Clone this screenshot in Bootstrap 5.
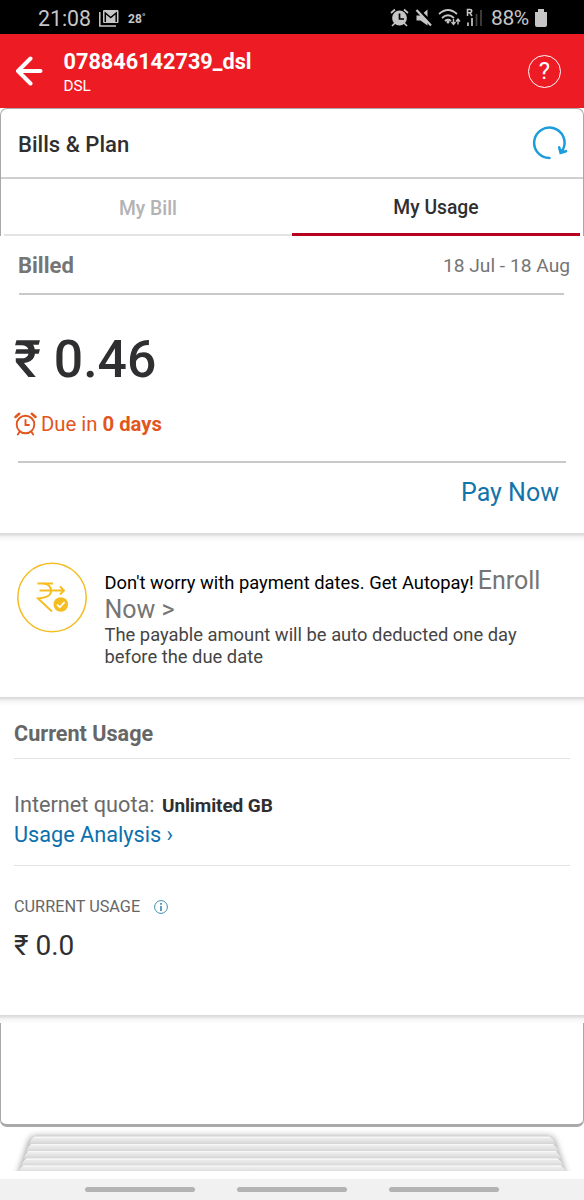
<!DOCTYPE html>
<html lang="en">
<head>
<meta charset="utf-8">
<meta name="viewport" content="width=device-width, initial-scale=1">
<title>Bills &amp; Plan</title>
<link href="https://cdn.jsdelivr.net/npm/bootstrap@5.3.0/dist/css/bootstrap.min.css" rel="stylesheet">
<style>
body{font-family:Roboto,"Noto Sans",sans-serif;background:#fff;color:#2f2f31;width:584px;height:1200px;overflow:hidden;line-height:1}
svg{display:block;flex:none}
.status{height:34px;background:#000;color:#c6c6c6;padding:3px 37px 0 38px}
.clock{font-size:21.3px;width:61px}
.temp{font-size:12px;font-weight:700;margin-left:9px}
.batt{font-size:21px;width:44px;margin-left:8px;letter-spacing:-.4px}
.appbar{height:74px;background:#ed1c24;color:#fff;padding:0 23px 0 15px}
.acct{font-size:21.7px;line-height:26px;font-weight:700;padding-top:3px}
.kind{font-size:15.3px;line-height:22px}
.help{width:33px;height:33px;border:1.6px solid #fff;font-size:24px}
.panel-top{height:128px;border:1px solid #a8a8a8;border-bottom:0;border-radius:7px 7px 0 0}
.heading{height:70px;border-bottom:2px solid #cfcfcf;padding:2px 15px 0 17px;font-size:22.1px;font-weight:500}
.heading svg{margin-top:-3px}
.tabs{height:57px;padding:0 3px;font-size:19.3px;font-weight:500}
.tabs div{padding-top:4px;border-bottom:2px solid #e3e3e3;color:#b3b3b3}
.tabs .current{border-bottom:3px solid #b8001f;color:#2f2f31}
.billed{height:57px;padding:2px 14px 0 18px;font-size:22px;font-weight:700;color:#757575}
.billed .period{font-size:19.2px;font-weight:400}
.rule{height:2px;background:#c9c9c9}
.amount{height:90px;line-height:90px;margin-top:20px;padding-left:14px;font-size:51.7px;font-weight:500;margin-bottom:-1px}
.due{height:40px;padding-left:14px;font-size:20.3px;color:#e2551d;gap:4px}
.pay{height:70px;line-height:60px;padding-right:25px;font-size:25px;color:#1374aa}
.lifted{background:linear-gradient(#d7d7d7 0,#e3e3e3 2px,#f5f5f5 4px,#fff 9px) no-repeat 0 0/100% 9px}
.autopay{height:164px;padding:29px 0 0 17px;gap:17.5px}
.autopay p{width:460px}
.lead-line{font-size:25px;line-height:29px;color:#757575;padding-top:4px}
.lead-line .pitch{font-size:18.35px;line-height:1;color:#000}
.note{font-size:18.35px;line-height:22px;color:#454545}
.usage{height:318px;padding:0 14px}
.usage h2{font-size:21.6px;line-height:35px;padding-top:19px;height:62px;font-weight:700;color:#666;border-bottom:1px solid #e2e2e2}
.quota{height:107px;padding-top:31px;font-size:21.7px;line-height:29px;color:#6a6a6a;border-bottom:1px solid #e2e2e2}
.quota b{font-size:19px;font-weight:700;letter-spacing:-.1px;color:#2f2f31;margin-left:2px}
.quota a{color:#0b70ad;text-decoration:none}
.cap{font-size:16.25px;line-height:28px;padding-top:27px;color:#666}
.value{font-size:28px;line-height:50px}
.tail{height:112px;padding-top:8px}
.tail div{height:104px;border:1.5px solid #a9a9a9;border-bottom-width:3px;border-top:0;border-radius:0 0 7px 7px}
.navkeys{height:21px;background:#f1f1f1;padding-left:85px;gap:42.5px;margin-top:8px}
.navkeys i{width:109.5px;height:5px;border-radius:3px;background:#b3b3b3}
</style>
</head>
<body>
<div class="status d-flex align-items-center">
  <span class="clock">21:08</span>
  <svg width="20" height="18" viewBox="0 0 20 18" fill="none" stroke="#c6c6c6" style="margin-top:-2px"><path d="M.8 3v14H17" stroke-width="1.5"/><rect x="4" y="1" width="15.5" height="13" rx="1" fill="#c6c6c6" stroke="none"/><path d="M6.300 13V4l5.400 4.500L17.200 4v9" stroke="#000" stroke-width="1.500"/></svg>
  <span class="temp">28˚</span>
  <div class="d-flex align-items-center ms-auto">
    <svg width="93" height="20" viewBox="0 0 93 20" fill="none" stroke="#c6c6c6" stroke-width="1.7" style="margin-top:-2px"><circle cx="9.500" cy="10" r="7.400" fill="#c6c6c6" stroke="none"/><path d="M9.500 5.500V11H14" stroke="#000"/><path d="M1 5l4-3.500M18 5l-4-3.500M5 15l-3 3M14 15l3 3"/><path d="M26.500 7.500h4l7-6v16l-7-5h-4z" fill="#c6c6c6" stroke="none"/><path d="M27.500 .5l16 16" stroke="#000" stroke-width="2.500"/><path d="M26.500 2L41 17.500" stroke-width="2.300"/><path d="M49 6q9-8 18 0M52 10q6-5.500 12 0M55 13q3-2.500 6 0"/><circle cx="58" cy="14" r="1.500" fill="#c6c6c6" stroke="none"/><path d="M63.500 11v5M61.500 14l2 2.500 2-2.500M68 16.500v-5M66 13.500l2-2.500 2 2.500" stroke-width="1.400"/><path d="M77.500 8V1.500h2.200q2 0 2 1.600T79.700 4.700h-2.200M79.700 4.700L82 8" stroke-width="1.500"/><path d="M78 18v-3.500M82 18v-8"/><path d="M86.500 18V6M91 18V2" stroke="#444"/></svg>
    <span class="batt">88%</span>
    <svg width="12" height="18" viewBox="0 0 12 18" fill="#c6c6c6" style="margin-top:-1px"><path d="M3 0h6v3h3v13q0 2-2 2H2q-2 0-2-2V3h3z"/></svg>
  </div>
</div>
<header class="appbar d-flex align-items-center">
  <svg width="28" height="30" viewBox="0 0 28 30" fill="none" stroke="#fff" stroke-width="4" stroke-linecap="round" stroke-linejoin="round"><path d="M15.500 2.500L3 15l12.500 12.500M3.500 15H25.500"/></svg>
  <div class="ms-auto order-2 help rounded-circle d-flex align-items-center justify-content-center">?</div>
  <div style="margin-left:20.5px"><div class="acct">078846142739_dsl</div><div class="kind">DSL</div></div>
</header>
<section class="panel-top">
  <div class="heading d-flex align-items-center justify-content-between"><span>Bills &amp; Plan</span>
    <svg width="36" height="36" viewBox="0 0 36 36" fill="none" stroke="#1c9ddb" stroke-width="2.500" stroke-linecap="round"><path d="M17.500 33A15.200 15.200 0 1 1 31 24.500"/><path d="M27.200 22.500l1.500 5.300 5.300-1.600" stroke-width="2.700"/><path d="M28 24l4 2-3 1.500z" fill="#1c9ddb" stroke-width="1"/></svg>
  </div>
  <div class="tabs d-flex text-center"><div class="w-50 d-flex align-items-center justify-content-center">My Bill</div><div class="w-50 current d-flex align-items-center justify-content-center">My Usage</div></div>
</section>
<section>
  <div class="billed d-flex align-items-center justify-content-between"><span>Billed</span><span class="period">18 Jul - 18 Aug</span></div>
  <div class="rule" style="margin:0 20px 0 19px"></div>
  <div class="amount">₹ 0.46</div>
  <div class="due d-flex align-items-center">
    <svg width="23" height="24" viewBox="0 0 23 24" fill="none" stroke="#e2551d" stroke-width="1.900" stroke-linecap="round"><circle cx="11.500" cy="12.500" r="8.800"/><path d="M11.500 8v5H15M5.500 20l-1.700 2.500M17.500 20l1.700 2.500"/><path d="M1.500 5L5.200 1.800M21.500 5L17.800 1.800" stroke-width="2.500"/></svg>
    <span>Due in <b>0 days</b></span>
  </div>
  <div class="rule" style="margin:17px 18px 0"></div>
  <div class="pay text-end">Pay Now</div>
</section>
<section class="autopay lifted d-flex align-items-start">
  <svg width="70" height="71" viewBox="0 0 70 71" fill="none" stroke="#f5bd20" stroke-width="1.900"><circle cx="35" cy="35.500" r="34.200" stroke-width="1.500"/><path d="M20.500 21.500H36M22.500 28.500H46.500M43 24.500l4 4-4 4"/><path d="M27 21.500q7 1 7 7.500T21 36.500L35 49.500"/><circle cx="43.800" cy="42.500" r="7.300" fill="#f5bd20" stroke="none"/><path d="M40 42.500l2.800 2.700 4.800-5" stroke="#fff" stroke-width="1.700"/></svg>
  <div><p class="lead-line m-0"><span class="pitch">Don't worry with payment dates. Get Autopay!</span><span class="ms-1">Enroll</span><br><span>Now &gt;</span></p><p class="note m-0">The payable amount will be auto deducted one day<br>before the due date</p></div>
</section>
<section class="usage lifted">
  <h2 class="m-0">Current Usage</h2>
  <div class="quota"><div>Internet quota: <b>Unlimited GB</b></div><a href="#">Usage Analysis ›</a></div>
  <div class="cap d-flex align-items-center">CURRENT USAGE
    <svg style="margin:-1px 0 0 14px" width="14" height="14" viewBox="0 0 14 14" fill="none" stroke="#3f8eb4"><circle cx="7" cy="7" r="6.400" stroke-width="1"/><path d="M7 6v5M7 3v1.700" stroke-width="1.700"/></svg>
  </div>
  <div class="value">₹ 0.0</div>
</section>
<section class="tail lifted"><div></div></section>
<svg width="584" height="44" viewBox="0 0 584 44">
  <defs><linearGradient id="sheet" x1="0" y1="0" x2="0" y2="1"><stop offset="0" stop-color="#f1f1f1"/><stop offset=".45" stop-color="#e5e5e5"/><stop offset="1" stop-color="#cfcfcf"/></linearGradient><filter id="soft" x="-10%" y="-50%" width="120%" height="200%"><feGaussianBlur stdDeviation="3"/></filter></defs>
  <path d="M17 50L29 14Q31 9 37 9H547Q553 9 555 14L567 50z" fill="#888" filter="url(#soft)" opacity=".8"/>
  <g fill="url(#sheet)">
    <path d="M29 18Q31 9.500 36 9.500H548Q553 9.500 556 18z"/>
    <path d="M26 25.500Q28 17 33 17H551Q556 17 559 25.500z"/>
    <path d="M23.500 32.500Q25.500 24 30.500 24H553.500Q558.500 24 561.500 32.500z"/>
    <path d="M21 40Q23 31.500 28 31.500H556Q561 31.500 564 40z"/>
    <path d="M18 47.500Q20 38.500 25 38.500H559Q564 38.500 567 47.500z"/>
  </g>
  <g stroke="#f7f7f7" stroke-width="1.200"><path d="M34 10.300H550M31 17.700H553M28 24.700H556M26 32.200H558M23 39.200H561"/></g>
</svg>
<div class="navkeys d-flex align-items-center"><i></i><i></i><i></i></div>
<script src="https://cdn.jsdelivr.net/npm/bootstrap@5.3.0/dist/js/bootstrap.bundle.min.js"></script>
</body>
</html>
